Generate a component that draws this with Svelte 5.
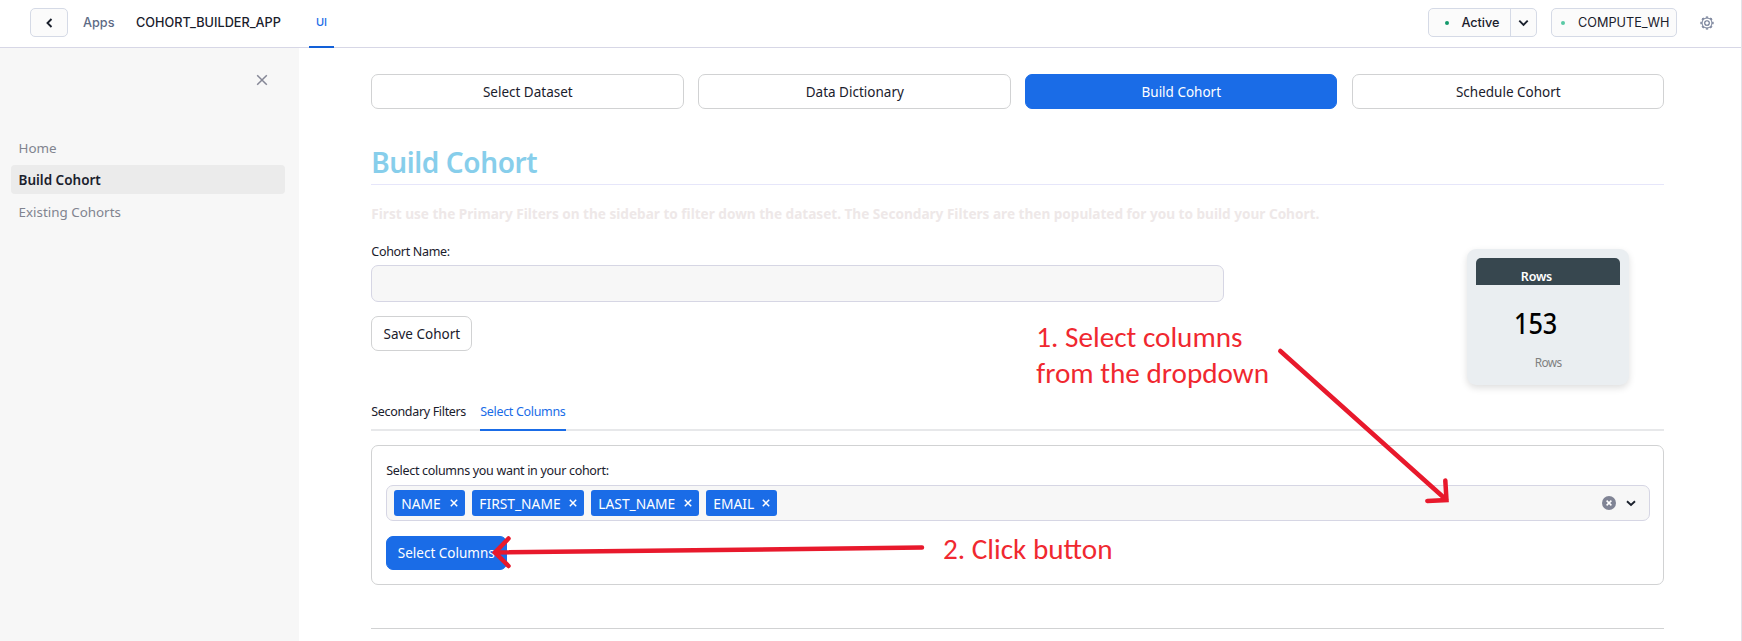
<script>
  const steps = ['Select Dataset', 'Data Dictionary', 'Build Cohort', 'Schedule Cohort'];
  const pages = ['Home', 'Build Cohort', 'Existing Cohorts'];
  const current = 'Build Cohort';
  const columns = [
    { name: 'NAME', width: 71 },
    { name: 'FIRST_NAME', width: 112 },
    { name: 'LAST_NAME', width: 108 },
    { name: 'EMAIL', width: 71 }
  ];
</script>

<div class="page">
  <header>
    <button class="hbtn back" aria-label="Back">
      <svg width="8" height="10" viewBox="0 0 8 10"><path d="M6.500 1 2.500 5l4 4" fill="none" stroke="#1a202c" stroke-width="1.9" /></svg>
    </button>
    <span class="crumb">Apps</span>
    <span class="app">COHORT_BUILDER_APP</span>
    <span class="uitab">UI</span>
    <div class="right">
      <div class="hbtn active">
        <i class="dot"></i><span>Active</span>
        <div class="drop">
          <svg width="11" height="8" viewBox="0 0 11 8"><path d="M1.300 1.700 5.500 5.900 9.700 1.700" fill="none" stroke="#1a202c" stroke-width="1.9" /></svg>
        </div>
      </div>
      <div class="hbtn wh"><i class="dot light"></i><span>COMPUTE_WH</span></div>
      <svg class="gear" width="14" height="14" viewBox="0 0 14 14" fill="none" stroke="#6b7690">
        <circle cx="7" cy="7" r="5" stroke-width="1" />
        <circle cx="7" cy="7" r="6" stroke-width="1.2" pathLength="16" stroke-dasharray="1 1" stroke-dashoffset=".5" />
        <circle cx="7" cy="7" r="2.300" stroke-width="1.1" />
      </svg>
    </div>
  </header>

  <div class="body">
    <aside>
      <div class="closebar">
        <svg width="12" height="12" viewBox="0 0 12 12"><path d="M1.200 1.200 10.800 10.800M10.800 1.200 1.200 10.800" stroke="#858796" stroke-width="1.5" /></svg>
      </div>
      <nav>
        {#each pages as p}
          <div class="nav" class:on={p === current}>{p}</div>
        {/each}
      </nav>
    </aside>

    <main>
      <div class="steps">
        {#each steps as s}
          <button class="btn" class:primary={s === current}>{s}</button>
        {/each}
      </div>
      <h1>Build Cohort</h1>
      <p class="hint">First use the Primary Filters on the sidebar to filter down the dataset. The Secondary Filters are then populated for you to build your Cohort.</p>

      <div class="form">
        <div class="fields">
          <div class="label name">Cohort Name:</div>
          <div class="input"></div>
          <button class="btn save">Save Cohort</button>
        </div>
        <div class="card">
          <div class="cardhead">Rows</div>
          <div class="count">153</div>
          <div class="unit">Rows</div>
        </div>
      </div>

      <div class="tabs">
        <span>Secondary Filters</span>
        <span class="sel">Select Columns</span>
      </div>

      <section class="box">
        <div class="label">Select columns you want in your cohort:</div>
        <div class="select">
          {#each columns as c}
            <div class="tag" style="width:{c.width}px">
              <span>{c.name}</span>
              <svg width="8" height="8" viewBox="0 0 8 8"><path d="M.8.8 7.200 7.200M7.200.8.8 7.200" stroke="#fff" stroke-width="1.5" /></svg>
            </div>
          {/each}
          <div class="controls">
            <svg width="14" height="14" viewBox="0 0 14 14"><circle cx="7" cy="7" r="7" fill="#808495" /><path d="M4.600 4.600 9.400 9.400M9.400 4.600 4.600 9.400" stroke="#fff" stroke-width="1.5" /></svg>
            <svg width="10" height="7" viewBox="0 0 10 7"><path d="M1 1.300 5 5 9 1.300" fill="none" stroke="#1a202c" stroke-width="1.9" /></svg>
          </div>
        </div>
        <button class="btn primary submit">Select Columns</button>
      </section>
      <hr />
    </main>
  </div>

  <div class="note one">1. Select columns<br />from the dropdown</div>
  <div class="note two">2. Click button</div>
  <svg class="arrows" width="1742" height="641" viewBox="0 0 1742 641" fill="none" stroke="#e8192c" stroke-width="4.500" stroke-linecap="round">
    <path d="M1280.300 351 1446 499.500" />
    <path d="M1445.300 480.500 1446.500 500 1427.300 501" stroke-linejoin="miter" />
    <path d="M922 547.600 495 552.500" />
    <path d="M508.500 538.500 495 552.500 508.500 566" />
  </svg>
</div>

<style>
  :global(body) { background: #fff; overflow: hidden; }
  .page { position: relative; width: 1742px; height: 641px; box-sizing: border-box; border-right: 1px solid #e3e3e8; overflow: hidden; font: 13.500px "Noto Sans", "Open Sans", sans-serif; color: #1a202c; display: flex; flex-direction: column; }
  .page :global(*) { box-sizing: border-box; }
  button { font: inherit; color: inherit; padding: 0; margin: 0; }
  header { height: 48px; border-bottom: 1px solid #d7d7e6; display: flex; align-items: flex-start; padding: 8px 27px 0 30px; font: 500 12.700px/29px Inter, sans-serif; flex: none; }
  .hbtn { height: 29px; border: 1px solid #d5dae6; border-radius: 5px; background: #fbfbfb; display: flex; align-items: center; line-height: 27px; }
  .back { width: 38px; justify-content: center; }
  .crumb { margin-left: 15px; width: 53px; color: #5d6a85; }
  .app { width: 173px; white-space: nowrap; }
  .uitab { width: 25px; height: 40px; border-bottom: 2px solid #1260d8; color: #1a6ce7; font-size: 11px; line-height: 28px; text-align: center; }
  .right { margin-left: auto; display: flex; align-items: center; }
  .active { width: 109px; padding-left: 16px; margin-right: 14px; }
  .active span { letter-spacing: -.08px; }
  .dot { width: 4px; height: 4px; border-radius: 50%; background: #13996b; margin-right: 12.500px; }
  .dot.light { background: #59c9a5; margin-right: 13px; }
  .drop { margin-left: auto; width: 26px; height: 27px; border-left: 1px solid #d5dae6; display: flex; align-items: center; justify-content: center; }
  .wh { width: 126px; padding-left: 9px; font-weight: 400; }
  .gear { margin-left: 23px; }

  .body { flex: 1; display: flex; }
  aside { width: 299px; background: #f7f7f7; padding: 0 14px 0 11px; flex: none; }
  .closebar { height: 117px; padding: 26px 17px 0 0; display: flex; justify-content: flex-end; height: 85px; }
  nav { display: grid; gap: 3px; }
  .nav { height: 29px; line-height: 31px; border-radius: 4px; padding-left: 7.500px; color: #81848f; font-size: 13.400px; }
  .nav.on { background: #ebebeb; font-weight: 600; font-size: 13.500px; color: #1a202c; }

  main { width: 1365.300px; padding: 26px 0 0 72.300px; flex: none; }
  .steps { display: grid; grid-template-columns: 313px 313px 312px 312px; column-gap: 14px; }
  .steps .btn:last-child { position: relative; left: 1px; }
  .btn { height: 35px; border: 1px solid #d1d2d3; border-radius: 7px; background: #fff; line-height: 31px; padding-top: 2px; }
  .btn.primary { background: #1a6ce7; border-color: #1a6ce7; color: #fff; }
  h1 { margin: 30px 0 0; height: 46px; border-bottom: 1px solid #e6e6fa; font-size: 28px; line-height: 46px; font-weight: 600; letter-spacing: -.4px; color: #87ceeb; }
  .hint { margin: 17px 0 0; height: 25px; line-height: 24px; font-size: 13.600px; font-weight: 700; color: #eee8e8; white-space: nowrap; }
  .form { display: flex; height: 201px; padding-top: 14px; }
  .fields { width: 853px; }
  .label { font-size: 12.500px; letter-spacing: -.31px; line-height: 20px; height: 24px; white-space: nowrap; }
  .label.name { line-height: 22px; }
  .input { height: 37px; border: 1px solid #d6d6e4; border-radius: 7px; background: #f7f7f7; }
  .save { width: 101px; margin-top: 14px; }
  .card { width: 162px; height: 136px; margin: 8px 0 0 243px; border-radius: 9px; background: #eaeef1; padding: 9px; box-shadow: 0 3px 7px rgba(0, 0, 0, .13); }
  .cardhead { height: 27px; background: #37474f; border-radius: 5px 5px 0 0; color: #fff; font-size: 12.500px; font-weight: 600; line-height: 37px; letter-spacing: -.2px; padding-left: 44.500px; }
  .count { width: 60px; font-size: 29px; font-weight: 500; color: #000; margin: 18px 0 0 38px; line-height: 40px; transform: scaleX(.87); transform-origin: left; }
  .unit { color: #808080; font-size: 11.800px; letter-spacing: -.6px; line-height: 20px; padding-left: 58.500px; margin-top: 9px; }
  .tabs { margin-top: -26px; height: 29px; border-bottom: 2px solid #e7e8ea; display: flex; gap: 14px; font-size: 12.500px; letter-spacing: -.33px; line-height: 20px; }
  .tabs span { height: 29px; width: 95px; white-space: nowrap; }
  .tabs .sel { width: 86px; color: #1a6ce7; border-bottom: 2px solid #1a6ce7; }
  .box { margin-top: 14px; height: 140px; border: 1px solid #d1d2d3; border-radius: 7px; padding: 15px 13px 0 14px; }
  .select { height: 36px; border: 1px solid #d6d6e4; border-radius: 7px; background: #f7f7f7; display: flex; align-items: center; gap: 7px; padding: 0 13px 0 7px; }
  .tag { height: 26px; background: #1a6ce7; border-radius: 3px; color: #fff; display: flex; align-items: center; justify-content: space-between; padding: 0 7.500px 0 7px; font-size: 13.800px; line-height: 27px; }
  .controls { margin-left: auto; display: flex; align-items: center; gap: 10px; }
  .submit { width: 121px; height: 34px; margin-top: 15px; display: block; line-height: 31px; padding: 1px 1px 0 0; }
  hr { margin: 43px 0 0; border: 0; border-top: 1px solid #d1d2d3; }

  .note { position: absolute; color: #f02830; font: 29.200px/36px Carlito, Lato, sans-serif; white-space: nowrap; }
  .one { left: 1036.300px; top: 319px; }
  .two { left: 943px; top: 531px; }
  .arrows { position: absolute; left: 0; top: 0; pointer-events: none; }
</style>
